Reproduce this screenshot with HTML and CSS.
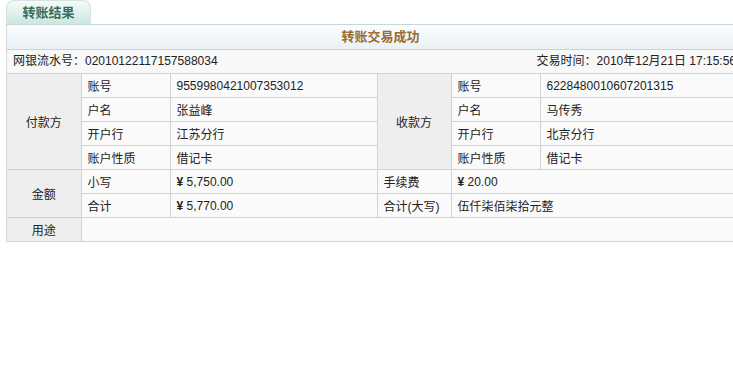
FILE: index.html
```html
<!DOCTYPE html>
<html lang="zh-CN">
<head>
    <meta charset="UTF-8">
    <title>转账结果</title>
    <link rel="stylesheet" href="styles.css">
</head>
<body>
    <div class="page">
        <div class="tab">转账结果</div>
        <div class="panel">
            <div class="panel-title">转账交易成功</div>
            <div class="info-row">
                <span>网银流水号：02010122117157588034</span>
                <span>交易时间：2010年12月21日 17:15:56</span>
            </div>
            <table class="detail">
                <colgroup>
                    <col class="c-head">
                    <col class="c-label">
                    <col class="c-value">
                    <col class="c-head">
                    <col class="c-label">
                    <col class="c-value2">
                </colgroup>
                <tr>
                    <td class="head" rowspan="4">付款方</td>
                    <td>账号</td>
                    <td>9559980421007353012</td>
                    <td class="head" rowspan="4">收款方</td>
                    <td>账号</td>
                    <td>6228480010607201315</td>
                </tr>
                <tr>
                    <td>户名</td>
                    <td>张益峰</td>
                    <td>户名</td>
                    <td>马传秀</td>
                </tr>
                <tr>
                    <td>开户行</td>
                    <td>江苏分行</td>
                    <td>开户行</td>
                    <td>北京分行</td>
                </tr>
                <tr>
                    <td>账户性质</td>
                    <td>借记卡</td>
                    <td>账户性质</td>
                    <td>借记卡</td>
                </tr>
                <tr>
                    <td class="head" rowspan="2">金额</td>
                    <td>小写</td>
                    <td><span class="yen">¥</span> 5,750.00</td>
                    <td>手续费</td>
                    <td colspan="2"><span class="yen">¥</span> 20.00</td>
                </tr>
                <tr>
                    <td>合计</td>
                    <td><span class="yen">¥</span> 5,770.00</td>
                    <td>合计(大写)</td>
                    <td colspan="2">伍仟柒佰柒拾元整</td>
                </tr>
                <tr>
                    <td class="head">用途</td>
                    <td colspan="5"></td>
                </tr>
            </table>
        </div>
    </div>
</body>
</html>
```

FILE: styles.css
```css
* {
    margin: 0;
    padding: 0;
    box-sizing: border-box;
}

body {
    background-color: #ffffff;
    font-family: "Liberation Sans", "Noto Sans CJK SC", sans-serif;
    font-size: 12px;
    color: #222;
    overflow: hidden;
}

.page {
    width: 760px;
    padding-left: 6px;
}

.tab {
    width: 85px;
    height: 24px;
    line-height: 24px;
    text-align: center;
    font-size: 13px;
    font-weight: bold;
    color: #356f60;
    background: linear-gradient(#f6fbf9, #cde6de);
    border: 1px solid #d3e4de;
    border-bottom: none;
    border-radius: 8px 8px 0 0;
}

.panel {
    width: 748px;
    border-left: 1px solid #d6d6d6;
    border-top: 1px solid #c3d7df;
}

.panel-title {
    height: 25px;
    line-height: 24px;
    text-align: center;
    font-size: 13px;
    font-weight: bold;
    color: #9c6a33;
    background: linear-gradient(#fcfdfe, #e8f1f6);
    border-bottom: 1px solid #cfcfcf;
}

.info-row {
    display: flex;
    justify-content: space-between;
    height: 23px;
    line-height: 23px;
    padding: 0 18px 0 6px;
    background-color: #f8f8f8;
}

.detail {
    width: 100%;
    border-collapse: collapse;
    table-layout: fixed;
}

.detail td {
    height: 24px;
    padding: 0 0 0 6px;
    border: 1px solid #d2d2d2;
    background-color: #fafafa;
    white-space: nowrap;
}

.detail tr td:first-child {
    border-left: none;
}

.detail td.head {
    background-color: #eeeeee;
    text-align: center;
    padding: 0;
}

.yen {
    font-weight: bold;
}

.c-head {
    width: 74px;
}

.c-label {
    width: 89px;
}

.c-value {
    width: 207px;
}

.c-value2 {
    width: 214px;
}
```
